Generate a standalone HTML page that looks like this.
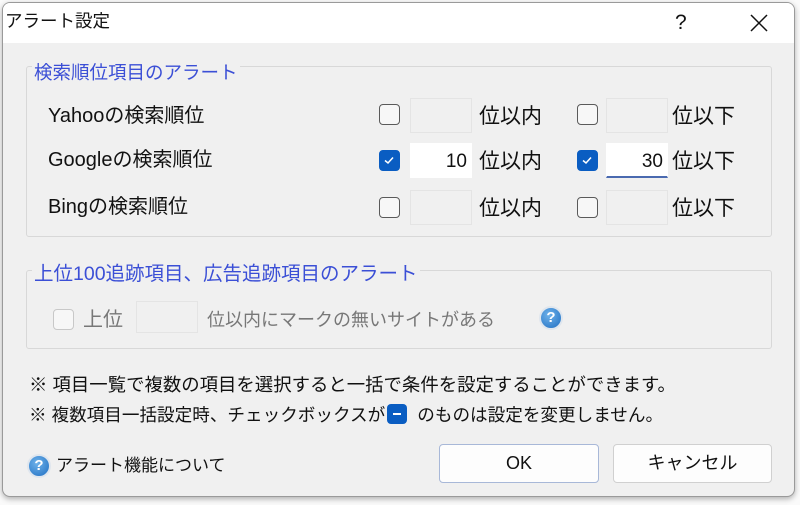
<!DOCTYPE html>
<html><head><meta charset="utf-8"><style>
*{margin:0;padding:0;box-sizing:border-box}
body{width:800px;height:505px;background:#fafafa;position:relative;overflow:hidden;font-family:"Liberation Sans","Noto Sans CJK JP",sans-serif;color:#111}
.win{position:absolute;left:2px;top:2px;width:793px;height:495px;background:#f0f0f0;border:1px solid #9a9a9a;border-radius:8px;overflow:hidden;box-shadow:0 2px 6px rgba(0,0,0,.3)}
.title{position:absolute;left:0;top:0;right:0;height:40px;background:#fff}
.a{position:absolute;white-space:nowrap;line-height:1}
.grp{position:absolute;border:1px solid #d8d8d8;border-radius:3px}
.lg{color:#3b4fd6;background:#f0f0f0;font-size:18.5px}
.cb{position:absolute;width:21px;height:21px;border:1.5px solid #5a5a5a;border-radius:4px;background:#f7f7f7}
.cb.on{background:#0a5dc2;border-color:#0a5dc2}
.in{position:absolute;width:62px;height:35px;border:1px solid #e4e4e4;background:#f0f0f0;text-align:right;font-size:19px;padding:7px 4px 0 0}
.in.w{background:#fff;border-color:#fff}
.t{font-size:20px}
.u{font-size:21px}
.help{position:absolute;width:24px;height:24px;border-radius:50%;background:radial-gradient(circle at 40% 35%,#6fb2ea,#1f6fc2);border:2px solid #dfe6ee;color:#fff;font-weight:bold;font-size:15px;text-align:center;line-height:20px}
.btn{position:absolute;height:39px;background:#fdfdfd;border:1px solid #d0d0d0;border-radius:4px;text-align:center;font-size:18px;line-height:37px}
</style></head><body>
<div class="win">
<div class="title"></div>
<div class="a" style="left:2px;top:10px;font-size:17.5px">アラート設定</div>
<div class="a" style="left:672px;top:9px;font-size:21px">?</div>
<svg class="a" style="left:746px;top:10px" width="20" height="20"><path d="M2 2L18 18M18 2L2 18" stroke="#111" stroke-width="1.5"/></svg>

<div class="grp" style="left:23px;top:63px;width:746px;height:171px"></div>
<div class="a lg" style="left:29px;top:61px;padding:0 2px">検索順位項目のアラート</div>
<div class="a t" style="left:45px;top:103px">Yahooの検索順位</div>
<div class="a t" style="left:45px;top:147px">Googleの検索順位</div>
<div class="a t" style="left:45px;top:194px">Bingの検索順位</div>

<div class="cb" style="left:376px;top:101px"></div>
<div class="in" style="left:407px;top:95px"></div>
<div class="a u" style="left:476px;top:103px">位以内</div>
<div class="cb" style="left:574px;top:101px"></div>
<div class="in" style="left:603px;top:95px"></div>
<div class="a u" style="left:669px;top:103px">位以下</div>

<div class="cb on" style="left:376px;top:147px"><svg width="18" height="18" style="position:absolute;left:0;top:0"><path d="M5 9.5L8 12L13 6.5" stroke="#fff" stroke-width="1.5" fill="none"/></svg></div>
<div class="in w" style="left:407px;top:140px">10</div>
<div class="a u" style="left:476px;top:148px">位以内</div>
<div class="cb on" style="left:574px;top:147px"><svg width="18" height="18" style="position:absolute;left:0;top:0"><path d="M5 9.5L8 12L13 6.5" stroke="#fff" stroke-width="1.5" fill="none"/></svg></div>
<div class="in w" style="left:603px;top:140px;border-bottom:2px solid #4a6ab0">30</div>
<div class="a u" style="left:669px;top:148px">位以下</div>

<div class="cb" style="left:376px;top:194px"></div>
<div class="in" style="left:407px;top:187px"></div>
<div class="a u" style="left:476px;top:195px">位以内</div>
<div class="cb" style="left:574px;top:194px"></div>
<div class="in" style="left:603px;top:187px"></div>
<div class="a u" style="left:669px;top:195px">位以下</div>

<div class="grp" style="left:23px;top:267px;width:746px;height:79px"></div>
<div class="a lg" style="left:29px;top:262px;padding:0 2px;font-size:19.5px">上位100追跡項目、広告追跡項目のアラート</div>
<div class="cb" style="left:50px;top:306px;border-color:#c8c8c8;border-width:1px"></div>
<div class="a t" style="left:80px;top:307px;color:#777">上位</div>
<div class="in" style="left:133px;top:298px;height:32px"></div>
<div class="a" style="left:204px;top:308px;color:#777;font-size:18px">位以内にマークの無いサイトがある</div>
<div class="help" style="left:536px;top:303px">?</div>

<div class="a" style="left:26px;top:373px;font-size:18.4px">※ 項目一覧で複数の項目を選択すると一括で条件を設定することができます。</div>
<div class="a" style="left:26px;top:401px;font-size:17.6px">※ 複数項目一括設定時、チェックボックスが<span style="display:inline-block;width:20px;height:20px;background:#0a5dc2;border-radius:4px;vertical-align:-3px;position:relative;margin:0 10px 0 2px"><span style="position:absolute;left:6px;top:9px;width:8px;height:2px;background:#fff"></span></span>のものは設定を変更しません。</div>

<div class="help" style="left:24px;top:451px">?</div>
<div class="a" style="left:53px;top:454px;font-size:17px">アラート機能について</div>
<div class="btn" style="left:436px;top:441px;width:160px;border-color:#a8b8d8">OK</div>
<div class="btn" style="left:610px;top:441px;width:159px">キャンセル</div>
</div>
</body></html>
